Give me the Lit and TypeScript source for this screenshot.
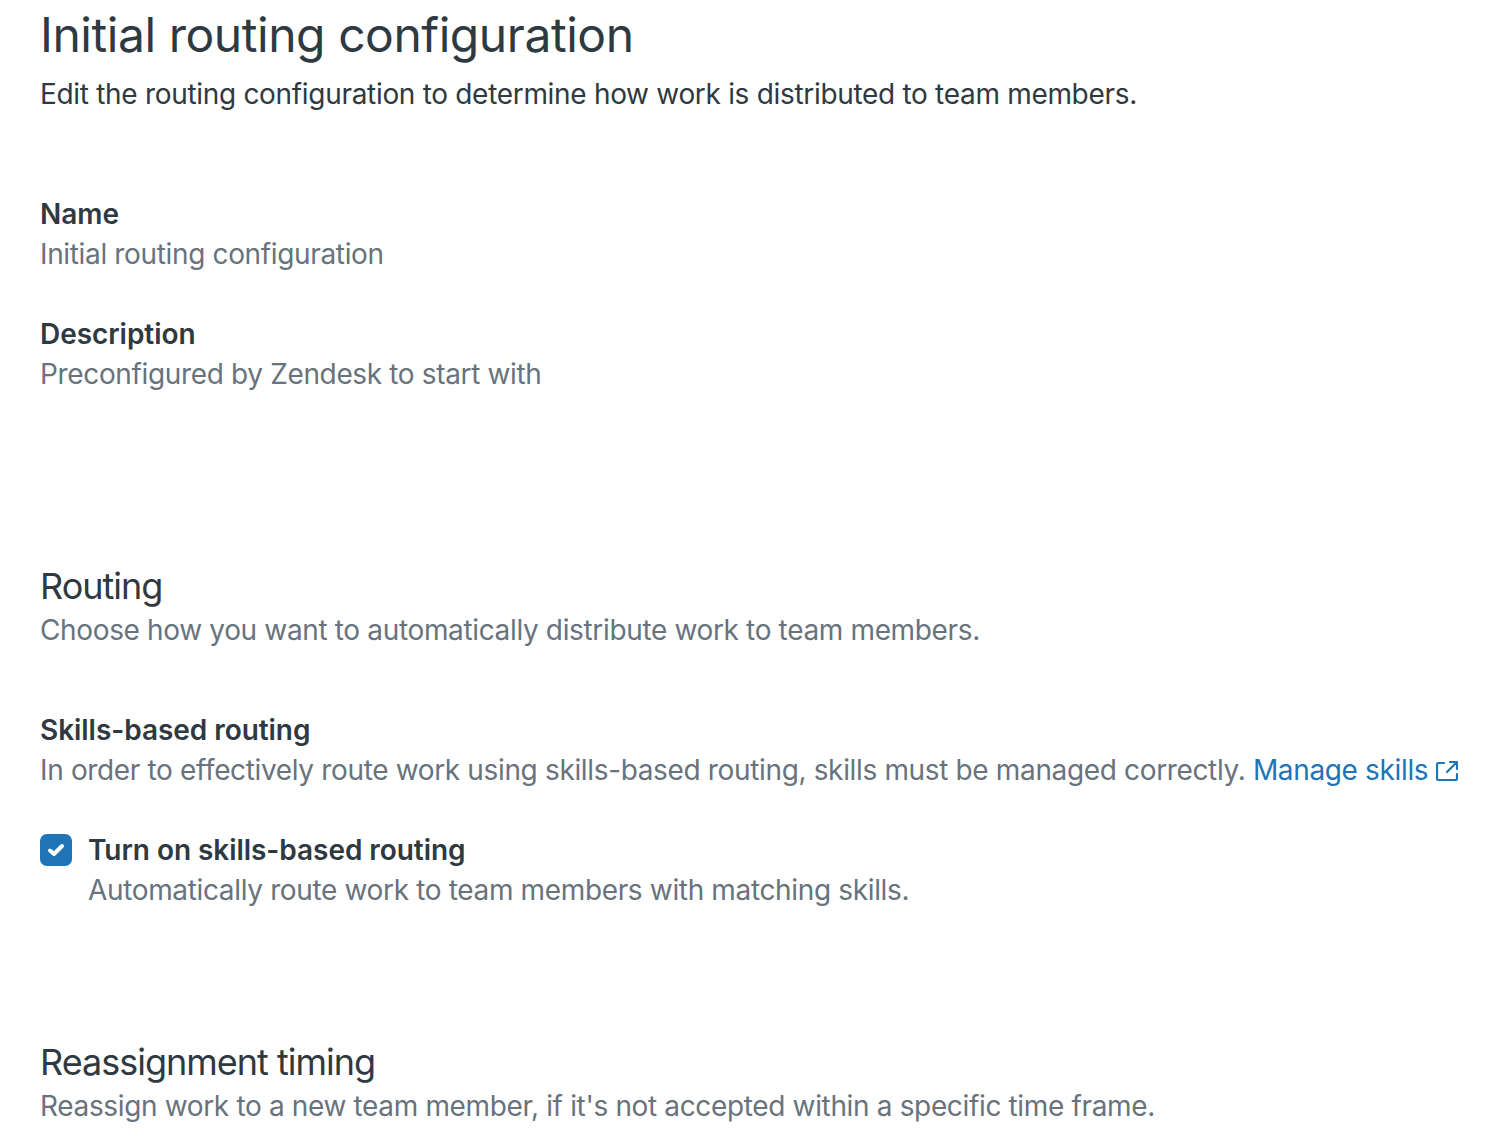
import { LitElement, html, css } from 'lit';
import { customElement } from 'lit/decorators.js';

@customElement('app-root')
export class AppRoot extends LitElement {
  static styles = css`
    :host {
      display: block;
      height: 1148px;
      overflow: hidden;
      background: #fff;
      padding: 0 0 0 40px;
      box-sizing: border-box;
      font-family: Inter, 'Liberation Sans', sans-serif;
      font-size: 28px;
      line-height: 40px;
      color: #68737d;
    }

    h1, h2, h3, p {
      margin: 0;
      font-weight: 400;
      white-space: nowrap;
    }

    p {
      letter-spacing: -0.35px;
    }

    h1 {
      font-size: 48px;
      line-height: 70px;
      letter-spacing: -0.45px;
      color: #2f3941;
    }

    .lead {
      color: #2f3941;
      letter-spacing: -0.31px;
      margin-top: 4px;
      margin-bottom: 80px;
    }

    h2 {
      font-size: 36px;
      line-height: 48px;
      letter-spacing: -1px;
      color: #2f3941;
    }

    h3 {
      font-size: 28px;
      font-weight: 600;
      letter-spacing: -0.05px;
      color: #2f3941;
    }

    .field {
      margin-bottom: 40px;
    }

    .routing {
      margin-top: 168px;
      margin-bottom: 60px;
    }

    a {
      color: #1f73b7;
      text-decoration: none;
    }

    a svg {
      width: 22px;
      height: 22px;
      vertical-align: -2px;
      margin-left: 8px;
    }

    .check-row {
      display: flex;
      gap: 16px;
      margin-top: 40px;
    }

    .box {
      width: 32px;
      height: 32px;
      margin-top: 4px;
      border-radius: 7px;
      background: #1f73b7;
      display: flex;
      align-items: center;
      justify-content: center;
    }

    .reassign {
      margin-top: 128px;
    }
  `;

  render() {
    return html`
      <h1>Initial routing configuration</h1>
      <p class="lead">Edit the routing configuration to determine how work is distributed to team members.</p>

      <div class="field">
        <h3>Name</h3>
        <p>Initial routing configuration</p>
      </div>
      <div class="field">
        <h3>Description</h3>
        <p>Preconfigured by Zendesk to start with</p>
      </div>

      <div class="routing">
        <h2>Routing</h2>
        <p>Choose how you want to automatically distribute work to team members.</p>
      </div>

      <h3>Skills-based routing</h3>
      <p>
        In order to effectively route work using skills-based routing, skills must be managed correctly.
        <a href="#">Manage skills<svg viewBox="0 0 22 22" fill="none" stroke="currentColor" stroke-width="2.2" stroke-linecap="round" stroke-linejoin="round"><path d="M8 3H2.5A1.5 1.5 0 0 0 1 4.5v14A1.5 1.5 0 0 0 2.5 20h17a1.5 1.5 0 0 0 1.5-1.5V14"/><path d="M14 2h7v7M20.5 2.5 11 12"/></svg></a>
      </p>

      <div class="check-row">
        <div class="box">
          <svg width="32" height="32" viewBox="0 0 32 32" fill="none" stroke="#fff" stroke-width="4" stroke-linecap="round" stroke-linejoin="round"><path d="M10 16.5l4 3.5 8-8"/></svg>
        </div>
        <div>
          <h3>Turn on skills-based routing</h3>
          <p>Automatically route work to team members with matching skills.</p>
        </div>
      </div>

      <div class="reassign">
        <h2>Reassignment timing</h2>
        <p>Reassign work to a new team member, if it's not accepted within a specific time frame.</p>
      </div>
    `;
  }
}

declare global {
  interface HTMLElementTagNameMap {
    'app-root': AppRoot;
  }
}
